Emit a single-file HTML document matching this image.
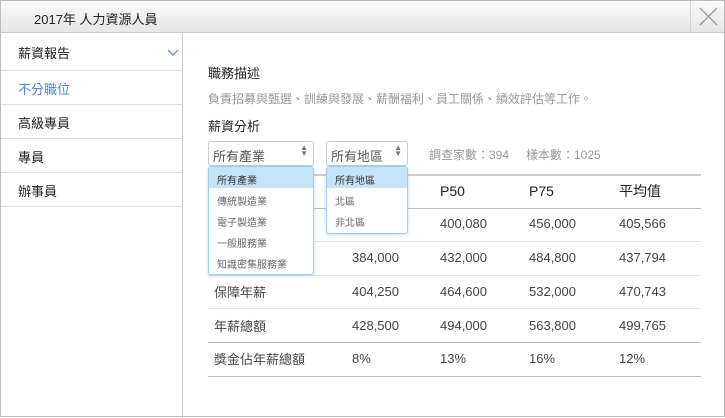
<!DOCTYPE html><html><head><meta charset="utf-8"><style>
*{box-sizing:border-box;margin:0;padding:0}
body{width:725px;height:417px;background:#fff;font-family:"Liberation Sans","Noto Sans CJK TC",sans-serif;position:relative;overflow:hidden;color:#333}
.win{position:absolute;left:0;top:0;width:725px;height:417px;border:1px solid #bbb}
.hdr{position:absolute;left:0;top:0;width:723px;height:32px;background:linear-gradient(#fafafa,#e6e6e6);border-bottom:1px solid #ccc}
.hdr .t{position:absolute;left:33px;top:8px;font-size:13px;color:#222}
.hdr .x{position:absolute;left:689px;top:0;width:34px;height:32px;border-left:1px solid #d6d6d6}
.side{position:absolute;left:0;top:33px;width:182px;height:384px;border-right:1px solid #ccc}
.it{position:absolute;left:0;width:181px;height:34px;border-bottom:1px solid #ddd;font-size:13px;padding:8px 0 0 17px;color:#222}
.a{position:absolute;font-size:12px;white-space:nowrap}
.g{color:#999}
.sel{position:absolute;top:140px;height:25px;border:1px solid #ccc;border-radius:3px;font-size:13px;color:#555;padding:4px 0 0 4px}
.dd{position:absolute;top:165px;border:1px solid #9cd0f0;border-radius:3px;background:#fff;font-size:10px;color:#666;box-shadow:0 1px 3px rgba(80,160,220,.35)}
.dd div{height:21px;padding:5px 0 0 8px}
.dd .h{background:#c5e3f6;color:#333}
.ln{position:absolute;left:207px;width:493px;height:1px;background:#e3e3e3}
.row{position:absolute;font-size:13px;color:#444}
</style></head><body><div class="win">
<div class="hdr"><div class="t">2017年 人力資源人員</div><div class="x"><svg width="34" height="32"><path d="M9 7L26 24M26 7L9 24" stroke="#999" stroke-width="1.3" fill="none"/></svg></div></div>
<div class="side">
<div class="it" style="top:0;height:37px;padding-top:9px">薪資報告<svg style="position:absolute;left:166px;top:15px" width="12" height="8"><path d="M1 1L6 6L11 1" stroke="#5b8fd8" stroke-width="1.3" fill="none"/></svg></div>
<div class="it" style="top:37px;color:#4a86e0">不分職位</div>
<div class="it" style="top:71px">高級專員</div>
<div class="it" style="top:105px">專員</div>
<div class="it" style="top:139px">辦事員</div>
</div>
<div class="a" style="left:207px;top:62px;font-size:13px;color:#222">職務描述</div>
<div class="a g" style="left:207px;top:89px">負責招募與甄選、訓練與發展、薪酬福利、員工關係、績效評估等工作。</div>
<div class="a" style="left:207px;top:115px;font-size:13px;color:#222">薪資分析</div>
<div class="sel" style="left:207px;width:106px">所有產業<span style="position:absolute;right:5px;top:3px;font-size:8px;color:#777;line-height:6px">▲<br>▼</span></div>
<div class="sel" style="left:325px;width:82px">所有地區<span style="position:absolute;right:5px;top:3px;font-size:8px;color:#777;line-height:6px">▲<br>▼</span></div>
<div class="a g" style="left:428px;top:145px">調查家數：394</div>
<div class="a g" style="left:525px;top:145px">樣本數：1025</div>
<div class="ln" style="top:173px;height:2px;background:#ccc"></div>
<div class="row" style="left:439px;top:182px;font-size:14px;color:#222">P50</div>
<div class="row" style="left:528px;top:182px;font-size:14px;color:#222">P75</div>
<div class="row" style="left:618px;top:180px;font-size:14px;color:#222">平均值</div>
<div class="ln" style="top:207px;background:#bbb"></div>
<div class="row" style="left:439px;top:215px">400,080</div><div class="row" style="left:528px;top:215px">456,000</div><div class="row" style="left:618px;top:215px">405,566</div>
<div class="ln" style="top:240px"></div>
<div class="row" style="left:351px;top:249px">384,000</div><div class="row" style="left:439px;top:249px">432,000</div><div class="row" style="left:528px;top:249px">484,800</div><div class="row" style="left:618px;top:249px">437,794</div>
<div class="ln" style="top:274px"></div>
<div class="row" style="left:213px;top:281px">保障年薪</div><div class="row" style="left:351px;top:283px">404,250</div><div class="row" style="left:439px;top:283px">464,600</div><div class="row" style="left:528px;top:283px">532,000</div><div class="row" style="left:618px;top:283px">470,743</div>
<div class="ln" style="top:307px"></div>
<div class="row" style="left:213px;top:315px">年薪總額</div><div class="row" style="left:351px;top:317px">428,500</div><div class="row" style="left:439px;top:317px">494,000</div><div class="row" style="left:528px;top:317px">563,800</div><div class="row" style="left:618px;top:317px">499,765</div>
<div class="ln" style="top:341px;background:#bbb"></div>
<div class="row" style="left:213px;top:348px">獎金佔年薪總額</div><div class="row" style="left:351px;top:350px">8%</div><div class="row" style="left:439px;top:350px">13%</div><div class="row" style="left:528px;top:350px">16%</div><div class="row" style="left:618px;top:350px">12%</div>
<div class="ln" style="top:375px;background:#bbb"></div>
<div class="dd" style="left:207px;width:106px;height:109px"><div class="h">所有產業</div><div>傳統製造業</div><div>電子製造業</div><div>一般服務業</div><div>知識密集服務業</div></div>
<div class="dd" style="left:325px;width:82px;height:68px"><div class="h">所有地區</div><div>北區</div><div>非北區</div></div>
</div></body></html>
